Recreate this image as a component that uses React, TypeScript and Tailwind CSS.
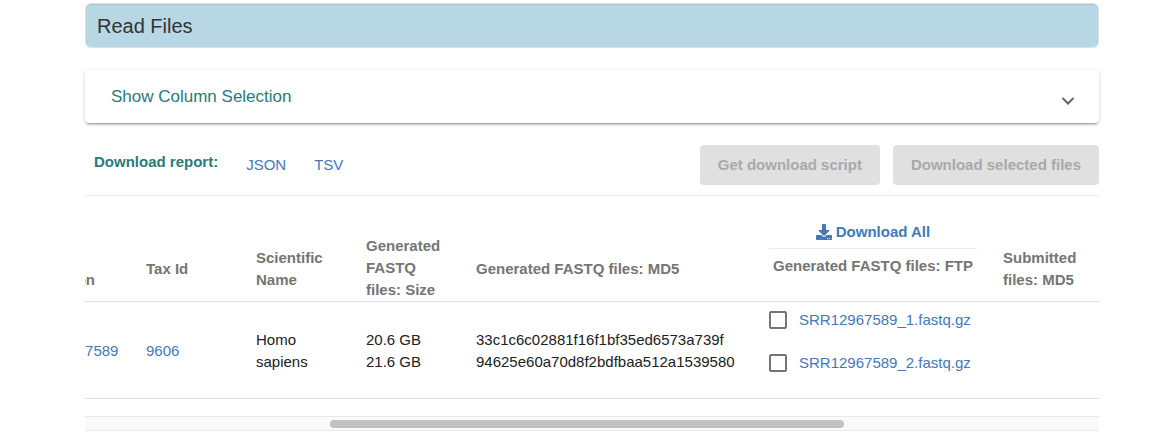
import React from "react";

const files = ["SRR12967589_1.fastq.gz", "SRR12967589_2.fastq.gz"];

function DownloadIcon() {
  return (
    <svg viewBox="0 0 512 512" className="size-4 shrink-0" fill="currentColor" aria-hidden="true">
      <path d="M216 0h80c13.300 0 24 10.700 24 24v168h87.700c17.800 0 26.700 21.500 14.100 34.100L269.700 378.300c-7.500 7.500-19.800 7.500-27.300 0L90.100 226.100c-12.600-12.600-3.700-34.100 14.100-34.100H192V24c0-13.300 10.700-24 24-24zm296 376v112c0 13.300-10.700 24-24 24H24c-13.300 0-24-10.700-24-24V376c0-13.300 10.700-24 24-24h146.700l49 49c20.100 20.100 52.500 20.100 72.600 0l49-49H488c13.300 0 24 10.700 24 24zm-124 88c0-11-9-20-20-20s-20 9-20 20 9 20 20 20 20-9 20-20zm64 0c0-11-9-20-20-20s-20 9-20 20 9 20 20 20 20-9 20-20z" />
    </svg>
  );
}

function Toolbar() {
  return (
    <div className="flex items-center justify-between border-b border-[#ececec] pt-[22px] pb-[10px]">
      <div className="flex items-center pl-[9px]">
        <span className="pb-[6px] text-[15px] font-bold text-[#2b7a78]">Download report:</span>
        <a href="#json" className="ml-7 text-[15px] text-[#4479b8]">JSON</a>
        <a href="#tsv" className="ml-7 text-[15px] text-[#4479b8]">TSV</a>
      </div>
      <div className="flex gap-[13px]">
        <button disabled className="h-10 rounded bg-[#e0e0e0] px-[18px] text-[15px] font-bold text-[#a9a9a9]">
          Get download script
        </button>
        <button disabled className="h-10 rounded bg-[#e0e0e0] px-[18px] text-[15px] font-bold text-[#a9a9a9]">
          Download selected files
        </button>
      </div>
    </div>
  );
}

function ResultsTable() {
  return (
    <div className="overflow-hidden pt-[25px]">
      <table className="-ml-[65px] w-[1101px] table-fixed border-collapse text-left text-[15px] leading-[22px] text-[#212121]">
        <colgroup>
          <col className="w-[126px]" />
          <col className="w-[110px]" />
          <col className="w-[110px]" />
          <col className="w-[110px]" />
          <col className="w-[293px]" />
          <col className="w-[234px]" />
          <col />
        </colgroup>
        <thead>
          <tr className="border-b border-[#dedede] text-[#757575]">
            <th className="pt-4 pr-6">Run<br />Accession</th>
            <th className="pt-4 pr-6">Tax Id</th>
            <th className="pt-4 pr-6">Scientific Name</th>
            <th className="pt-[14px] pr-6">Generated FASTQ files: Size</th>
            <th className="pt-4">Generated FASTQ files: MD5</th>
            <th className="pr-[26px] align-top whitespace-nowrap">
              <a href="#all" className="flex items-center justify-center gap-1 border-b border-[#ececec] pb-[5px] text-[#4479b8]">
                <DownloadIcon />
                Download All
              </a>
              <div className="pt-[6px] text-center">Generated FASTQ files: FTP</div>
            </th>
            <th className="pt-4 pr-6">Submitted files: MD5</th>
          </tr>
        </thead>
        <tbody>
          <tr className="h-[97px] border-b border-[#dedede]">
            <td className="pt-[2px]"><a href="#run" className="text-[#4479b8]">SRR12967589</a></td>
            <td className="pt-[2px]"><a href="#tax" className="text-[#4479b8]">9606</a></td>
            <td className="pt-[2px] pr-6">Homo sapiens</td>
            <td className="pt-[2px]">20.6 GB<br />21.6 GB</td>
            <td className="pt-[2px]">33c1c6c02881f16f1bf35ed6573a739f<br />94625e60a70d8f2bdfbaa512a1539580</td>
            <td className="pt-[7px] align-top">
              <div className="flex flex-col gap-[21px]">
                {files.map((name) => (
                  <div key={name} className="flex items-center gap-3">
                    <input
                      type="checkbox"
                      aria-label={`Select ${name}`}
                      className="size-[18px] shrink-0 appearance-none rounded-[2px] border-2 border-[#757575] bg-white"
                    />
                    <a href={`#${name}`} className="text-[#4479b8]">{name}</a>
                  </div>
                ))}
              </div>
            </td>
            <td />
          </tr>
        </tbody>
      </table>
    </div>
  );
}

export default function App() {
  return (
    <main className="bg-white pt-[3px] pr-14 pl-[85px] font-['Liberation_Sans',Arial,sans-serif]">
      <h2 className="rounded-md border border-[#dfe2e3] bg-[#b6d7e3] px-[11px] pt-2 pb-[6px] text-[20px] leading-[29px] text-[#333333] shadow-[inset_0_1px_1px_rgba(0,0,0,0.08)]">
        Read Files
      </h2>
      <button className="mt-[22px] flex h-[53px] w-full items-center justify-between rounded bg-white pr-6 pl-[26px] text-[17px] text-[#2b7a78] shadow-[0_3px_1px_-2px_rgba(0,0,0,0.2),0_2px_2px_0_rgba(0,0,0,0.14),0_1px_5px_0_rgba(0,0,0,0.12)]">
        <span>Show Column Selection</span>
        <svg viewBox="0 0 14 10" className="mt-2 h-[10px] w-[14px]" fill="none" stroke="#666666" strokeWidth="2" aria-hidden="true">
          <path d="M1.500 2 7 7.500 12.500 2" />
        </svg>
      </button>
      <Toolbar />
      <ResultsTable />
      <div className="mt-[17px] border-y border-[#e8e8e8] bg-[#fafafa] pt-[3px] pb-[2px] pl-[245px]">
        <div className="h-2 w-[514px] rounded-full bg-[#c1c1c1]" />
      </div>
    </main>
  );
}
